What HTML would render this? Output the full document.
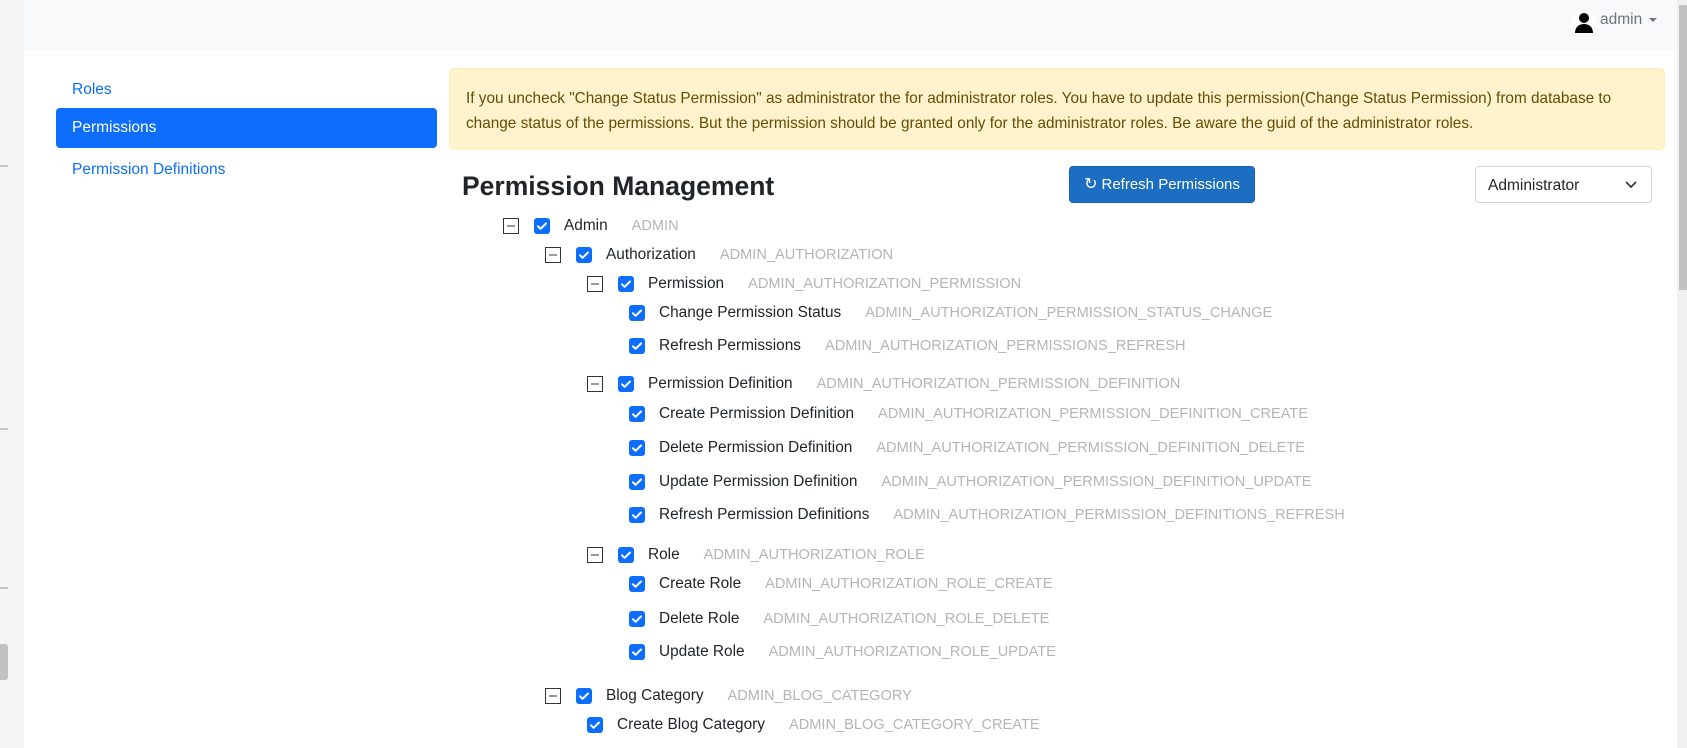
<!DOCTYPE html>
<html><head><meta charset="utf-8"><style>
*{box-sizing:border-box;margin:0;padding:0}
body{width:1687px;height:748px;overflow:hidden;background:#fff;font-family:"Segoe UI","Liberation Sans",sans-serif;font-size:16px;color:#212529;position:relative}
.a{position:absolute;white-space:nowrap}
.strip{left:0;top:0;width:24px;height:748px;background:#f5f5f5}
.dash{left:0;width:8px;height:2px;background:#c6c6c6}
.nav{left:24px;top:0;width:1653px;height:51px;background:#f8f9fa}
.sb{left:1677px;top:0;width:10px;height:748px;background:#f0f0f0}
.thumb{left:1679px;top:5px;width:8px;height:285px;background:#c1c1c1}
.link{color:#0d6efd;left:72px;line-height:20px;font-size:15.5px}
.pill{left:56px;top:108px;width:381px;height:40px;background:#0d6efd;border-radius:4px;color:#fff;padding-left:16px;line-height:40px;font-size:15.5px}
.alert{left:449px;top:68px;width:1216px;height:82px;background:#fff3cd;border:1px solid #ffecb5;border-radius:5px;color:#664d03;padding:18px 16px 0 16px;line-height:24.5px;white-space:normal;font-size:15.35px}
.title{left:462px;top:168px;font-size:26.5px;font-weight:600;line-height:36px}
.btn{left:1069px;top:166px;width:186px;height:37px;background:#1b6ec2;border:1px solid #1861ac;border-radius:4px;color:#fff;line-height:35px;text-align:center;font-size:15px}
.sel{left:1475px;top:166px;width:177px;height:37px;border:1px solid #ced4da;border-radius:4px;padding-left:12px;line-height:37px;font-size:15.5px}
.row{height:20px;line-height:20px;display:flex;align-items:center;font-size:15.4px}
.cb{width:16px;height:16px;background:#0d6efd;border-radius:3px;display:inline-flex;align-items:center;justify-content:center}
.col{width:16px;height:16px;border:1px solid #333;display:inline-block;position:relative}
.col:after{content:"";position:absolute;left:3px;right:3px;top:6px;height:2px;background:#999}
.code{color:#b5b5b5;margin-left:24px;font-size:14.6px}
.nm{margin-left:14px}
</style></head><body>
<div class="a strip"></div>
<div class="a dash" style="top:165px"></div>
<div class="a dash" style="top:428px"></div>
<div class="a dash" style="top:587px"></div>
<div class="a" style="left:0;top:644px;width:8px;height:36px;background:#c1c1c1;border-radius:0 3px 3px 0"></div>
<div class="a nav"></div>
<div class="a sb"></div><div class="a thumb"></div>
<svg class="a" style="left:1572px;top:10px" width="24" height="24" viewBox="0 0 24 24"><circle cx="12" cy="12" r="12" fill="#fff"/><circle cx="12" cy="8" r="5" fill="#000"/><path d="M3 23c0-6 4-9 9-9s9 3 9 9z" fill="#000"/></svg>
<div class="a" style="left:1600px;top:8px;color:#6c757d;font-size:15.5px;line-height:24px">admin</div>
<div class="a" style="left:1649px;top:18px;width:0;height:0;border-left:4px solid transparent;border-right:4px solid transparent;border-top:4px solid #6c757d"></div>
<div class="a link" style="top:80px">Roles</div>
<div class="a pill">Permissions</div>
<div class="a link" style="top:160px">Permission Definitions</div>
<div class="a alert">If you uncheck "Change Status Permission" as administrator the for administrator roles. You have to update this permission(Change Status Permission) from database to change status of the permissions. But the permission should be granted only for the administrator roles. Be aware the guid of the administrator roles.</div>
<div class="a title">Permission Management</div>
<div class="a btn"><span style="display:inline-block;font-size:16px;margin-right:4px">&#8635;</span>Refresh Permissions</div>
<div class="a sel">Administrator<svg style="position:absolute;right:14px;top:14px" width="12" height="8" viewBox="0 0 12 8"><path d="M1 1l5 5 5-5" stroke="#343a40" stroke-width="1.8" fill="none"/></svg></div>

<svg width="0" height="0" style="position:absolute"><defs><symbol id="ck" viewBox="0 0 16 16"><path d="M4 8.3l2.6 2.5L12 5.5" stroke="#fff" stroke-width="2" fill="none" stroke-linecap="round" stroke-linejoin="round"/></symbol></defs></svg>

<div class="a row" style="left:503px;top:216px"><span class="col"></span><span class="cb" style="margin-left:15px"><svg width="16" height="16"><use href="#ck"/></svg></span><span class="nm">Admin</span><span class="code">ADMIN</span></div>
<div class="a row" style="left:545px;top:245px"><span class="col"></span><span class="cb" style="margin-left:15px"><svg width="16" height="16"><use href="#ck"/></svg></span><span class="nm">Authorization</span><span class="code">ADMIN_AUTHORIZATION</span></div>
<div class="a row" style="left:587px;top:274px"><span class="col"></span><span class="cb" style="margin-left:15px"><svg width="16" height="16"><use href="#ck"/></svg></span><span class="nm">Permission</span><span class="code">ADMIN_AUTHORIZATION_PERMISSION</span></div>
<div class="a row" style="left:629px;top:303px"><span class="cb"><svg width="16" height="16"><use href="#ck"/></svg></span><span class="nm">Change Permission Status</span><span class="code">ADMIN_AUTHORIZATION_PERMISSION_STATUS_CHANGE</span></div>
<div class="a row" style="left:629px;top:336px"><span class="cb"><svg width="16" height="16"><use href="#ck"/></svg></span><span class="nm">Refresh Permissions</span><span class="code">ADMIN_AUTHORIZATION_PERMISSIONS_REFRESH</span></div>
<div class="a row" style="left:587px;top:374px"><span class="col"></span><span class="cb" style="margin-left:15px"><svg width="16" height="16"><use href="#ck"/></svg></span><span class="nm">Permission Definition</span><span class="code">ADMIN_AUTHORIZATION_PERMISSION_DEFINITION</span></div>
<div class="a row" style="left:629px;top:404px"><span class="cb"><svg width="16" height="16"><use href="#ck"/></svg></span><span class="nm">Create Permission Definition</span><span class="code">ADMIN_AUTHORIZATION_PERMISSION_DEFINITION_CREATE</span></div>
<div class="a row" style="left:629px;top:438px"><span class="cb"><svg width="16" height="16"><use href="#ck"/></svg></span><span class="nm">Delete Permission Definition</span><span class="code">ADMIN_AUTHORIZATION_PERMISSION_DEFINITION_DELETE</span></div>
<div class="a row" style="left:629px;top:472px"><span class="cb"><svg width="16" height="16"><use href="#ck"/></svg></span><span class="nm">Update Permission Definition</span><span class="code">ADMIN_AUTHORIZATION_PERMISSION_DEFINITION_UPDATE</span></div>
<div class="a row" style="left:629px;top:505px"><span class="cb"><svg width="16" height="16"><use href="#ck"/></svg></span><span class="nm">Refresh Permission Definitions</span><span class="code">ADMIN_AUTHORIZATION_PERMISSION_DEFINITIONS_REFRESH</span></div>
<div class="a row" style="left:587px;top:545px"><span class="col"></span><span class="cb" style="margin-left:15px"><svg width="16" height="16"><use href="#ck"/></svg></span><span class="nm">Role</span><span class="code">ADMIN_AUTHORIZATION_ROLE</span></div>
<div class="a row" style="left:629px;top:574px"><span class="cb"><svg width="16" height="16"><use href="#ck"/></svg></span><span class="nm">Create Role</span><span class="code">ADMIN_AUTHORIZATION_ROLE_CREATE</span></div>
<div class="a row" style="left:629px;top:609px"><span class="cb"><svg width="16" height="16"><use href="#ck"/></svg></span><span class="nm">Delete Role</span><span class="code">ADMIN_AUTHORIZATION_ROLE_DELETE</span></div>
<div class="a row" style="left:629px;top:642px"><span class="cb"><svg width="16" height="16"><use href="#ck"/></svg></span><span class="nm">Update Role</span><span class="code">ADMIN_AUTHORIZATION_ROLE_UPDATE</span></div>
<div class="a row" style="left:545px;top:686px"><span class="col"></span><span class="cb" style="margin-left:15px"><svg width="16" height="16"><use href="#ck"/></svg></span><span class="nm">Blog Category</span><span class="code">ADMIN_BLOG_CATEGORY</span></div>
<div class="a row" style="left:587px;top:715px"><span class="cb"><svg width="16" height="16"><use href="#ck"/></svg></span><span class="nm">Create Blog Category</span><span class="code">ADMIN_BLOG_CATEGORY_CREATE</span></div>
</body></html>
